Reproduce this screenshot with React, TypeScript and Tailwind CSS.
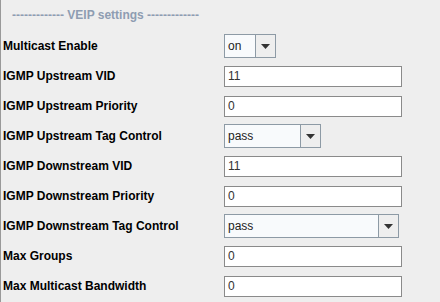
import React from "react";

function TextField({ value }: { value: string }) {
  return (
    <div className="w-[178px] h-[21px] border border-[#8a8a8a] bg-white flex items-center pl-[3px] text-[12px] text-[#333333] font-normal leading-none">
      {value}
    </div>
  );
}

function Select({ value, width }: { value: string; width: string }) {
  return (
    <div className={`${width} h-[24px] border border-[#8d9aa5] flex bg-[#f8fafc]`}>
      <div className="flex-1 flex items-center pl-[3px] text-[12px] text-[#222222] leading-none">{value}</div>
      <div className="w-[20px] border-l border-[#8d9aa5] bg-[#eeeeee] flex items-center justify-center">
        <svg width="9" height="5" viewBox="0 0 9 5">
          <path d="M0 0 H9 L4.5 5 Z" fill="#333333" />
        </svg>
      </div>
    </div>
  );
}

const rows: { label: string; control: React.ReactNode }[] = [
  { label: "Multicast Enable", control: <Select value="on" width="w-[52px]" /> },
  { label: "IGMP Upstream VID", control: <TextField value="11" /> },
  { label: "IGMP Upstream Priority", control: <TextField value="0" /> },
  { label: "IGMP Upstream Tag Control", control: <Select value="pass" width="w-[97px]" /> },
  { label: "IGMP Downstream VID", control: <TextField value="11" /> },
  { label: "IGMP Downstream Priority", control: <TextField value="0" /> },
  { label: "IGMP Downstream Tag Control", control: <Select value="pass" width="w-[175px]" /> },
  { label: "Max Groups", control: <TextField value="0" /> },
  { label: "Max Multicast Bandwidth", control: <TextField value="0" /> },
];

export default function App() {
  return (
    <div className="w-[440px] h-[302px] bg-[#eeeeee] border-l border-[#999999] overflow-hidden font-['Liberation_Sans',Arial,sans-serif] text-[12px]">
      <div className="h-[31px] pl-[11px] pt-[8px] font-bold text-[#8e9db2] whitespace-pre leading-[14px]">
        {"------------- VEIP settings -------------"}
      </div>
      {rows.map((r) => (
        <div key={r.label} className="grid grid-cols-[223px_1fr] h-[30px] items-center">
          <div className="pl-[2px] font-bold text-black">{r.label}</div>
          <div>{r.control}</div>
        </div>
      ))}
    </div>
  );
}
